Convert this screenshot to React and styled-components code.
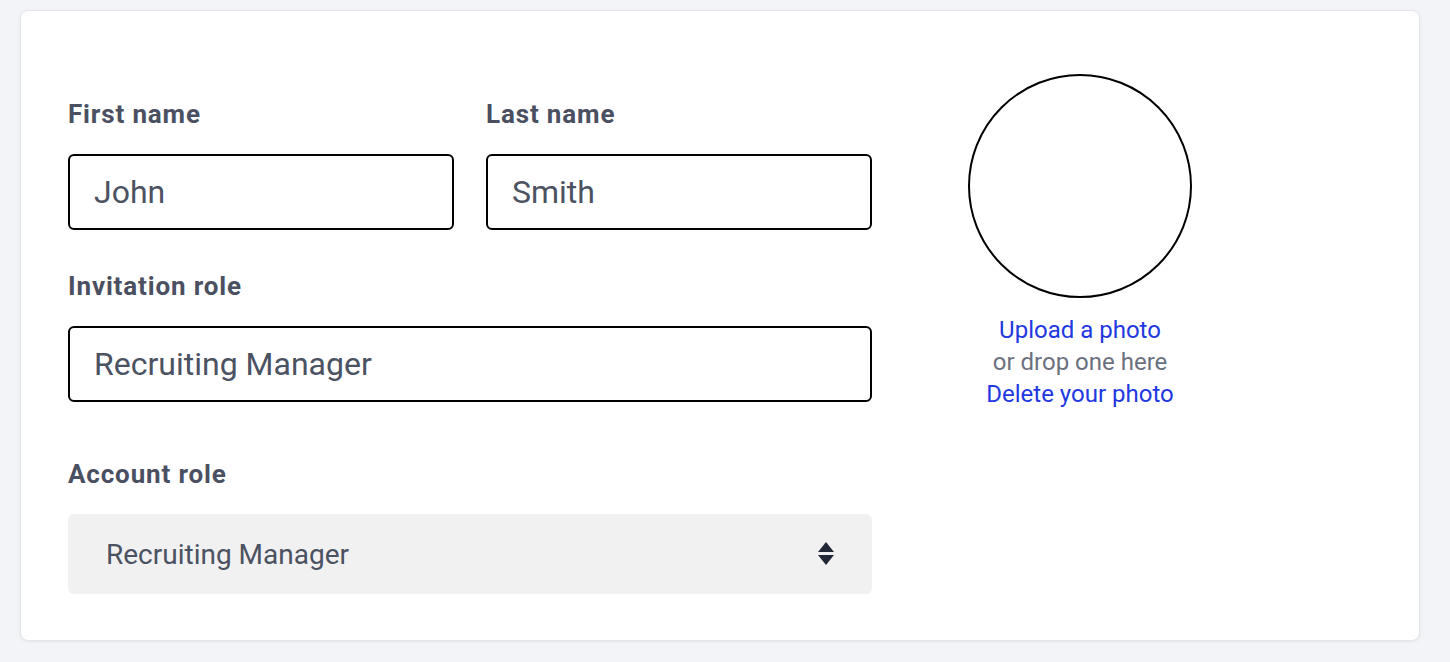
import React from "react";
import styled, { createGlobalStyle } from "styled-components";

const GlobalStyle = createGlobalStyle`
  body {
    margin: 0;
    background: #f3f4f8;
    font-family: Roboto, "Liberation Sans", sans-serif;
  }
`;

const Page = styled.div`
  padding: 10px 30px 20px 20px;
`;

const Card = styled.div`
  background: #fff;
  border: 1px solid #e4e5ea;
  border-radius: 8px;
  box-shadow: 0 1px 3px rgba(0, 0, 0, 0.06);
  padding: 63px 48px 46px 47px;
  display: flex;
  gap: 88px;
`;

const Form = styled.div`
  width: 804px;
  padding-top: 24px;
  display: flex;
  flex-direction: column;
`;

const Row = styled.div`
  display: flex;
  gap: 32px;
  margin-top: ${(p) => p.$gap || 0}px;
`;

const Field = styled.div`
  flex: 1;
  display: flex;
  flex-direction: column;
`;

const Label = styled.label`
  font-size: 26px;
  line-height: 32px;
  font-weight: 700;
  letter-spacing: 0.85px;
  color: #4a5061;
  margin-bottom: 24px;
`;

const Input = styled.input`
  box-sizing: border-box;
  height: 76px;
  width: 100%;
  border: 2px solid #000;
  border-radius: 6px;
  padding: 0 24px;
  font-family: inherit;
  font-size: 32px;
  color: #4b5262;
  outline: none;
  background: #fff;
`;

const SelectBox = styled.div`
  height: 80px;
  border-radius: 6px;
  background: #f1f1f2;
  display: flex;
  align-items: center;
  justify-content: space-between;
  padding: 0 38px 0 38px;
  font-size: 28px;
  color: #4b5262;
`;

const Photo = styled.div`
  width: 240px;
  display: flex;
  flex-direction: column;
  align-items: center;
`;

const Avatar = styled.div`
  width: 224px;
  height: 224px;
  box-sizing: border-box;
  border: 2px solid #000;
  border-radius: 50%;
  margin-bottom: 16px;
`;

const PhotoText = styled.div`
  font-size: 24px;
  line-height: 32px;
  color: ${(p) => (p.$link ? "#2238e0" : "#6b7080")};
  cursor: ${(p) => (p.$link ? "pointer" : "default")};
  text-align: center;
`;

const Arrows = () => (
  <svg width="16" height="24" viewBox="0 0 16 24">
    <path d="M8 0 L16 10 L0 10 Z" fill="#232838" />
    <path d="M0 13 L16 13 L8 23 Z" fill="#232838" />
  </svg>
);

export default function App() {
  return (
    <Page>
      <GlobalStyle />
      <Card>
        <Form>
          <Row>
            <Field>
              <Label>First name</Label>
              <Input defaultValue="John" />
            </Field>
            <Field>
              <Label>Last name</Label>
              <Input defaultValue="Smith" />
            </Field>
          </Row>
          <Row $gap={40}>
            <Field>
              <Label>Invitation role</Label>
              <Input defaultValue="Recruiting Manager" />
            </Field>
          </Row>
          <Row $gap={56}>
            <Field>
              <Label>Account role</Label>
              <SelectBox>
                <span>Recruiting Manager</span>
                <Arrows />
              </SelectBox>
            </Field>
          </Row>
        </Form>
        <Photo>
          <Avatar />
          <PhotoText $link>Upload a photo</PhotoText>
          <PhotoText>or drop one here</PhotoText>
          <PhotoText $link>Delete your photo</PhotoText>
        </Photo>
      </Card>
    </Page>
  );
}
